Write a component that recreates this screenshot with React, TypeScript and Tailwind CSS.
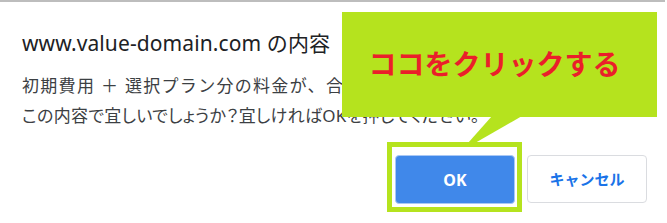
export default function App() {
  return (
    <div
      className="relative h-[223px] w-[667px] overflow-hidden bg-white"
      style={{ fontFamily: '"Noto Sans", "Noto Sans CJK JP", sans-serif' }}
    >
      {/* dialog */}
      <div className="h-full w-[665px] border-t-2 border-[#bdbdbd] bg-white">
        <div className="px-[22px] pt-[26px]">
          <h1 className="text-[21px] leading-[30px] tracking-[0.1px] text-[#202124]">
            www.value-domain.com の内容
          </h1>
          <div className="mt-[13px] text-[17px] leading-[30px] text-[#3c4043]">
            <p className="tracking-[1.3px]">初期費用 ＋ 選択プラン分の料金が、合計 3,960円 になります。</p>
            <p className="tracking-[0.3px] [font-feature-settings:'palt']">
              この内容で宜しいでしょうか？宜しければOKを押してください。
            </p>
          </div>
        </div>
        <div className="mt-[24px] flex justify-end gap-3 pr-[18px]">
          <button className="h-[49px] w-[120px] rounded-[4px] border border-[#a9c8f5] bg-[#4088ea] text-[16px] font-bold text-white">
            OK
          </button>
          <button className="h-[48px] w-[120px] rounded-[4px] border border-[#dadce0] bg-white text-[15px] font-bold text-[#1a73e8]">
            キャンセル
          </button>
        </div>
      </div>

      {/* annotation: highlight around OK */}
      <div className="absolute left-[387px] top-[142px] h-[70px] w-[135px] border-[5px] border-[#b5e31e]" />

      {/* annotation: callout */}
      <div className="absolute left-[342px] top-[12px] flex h-[105px] w-[315px] items-center justify-center bg-[#b5e31e] pb-[2px] pr-[10px]">
        <span className="text-[28px] font-bold text-[#ea1f2a]">ココをクリックする</span>
      </div>
      <svg className="absolute left-0 top-0" width="667" height="223">
        <polygon points="492,116 522,116 475,143 468,143" fill="#b5e31e" />
      </svg>
    </div>
  )
}
